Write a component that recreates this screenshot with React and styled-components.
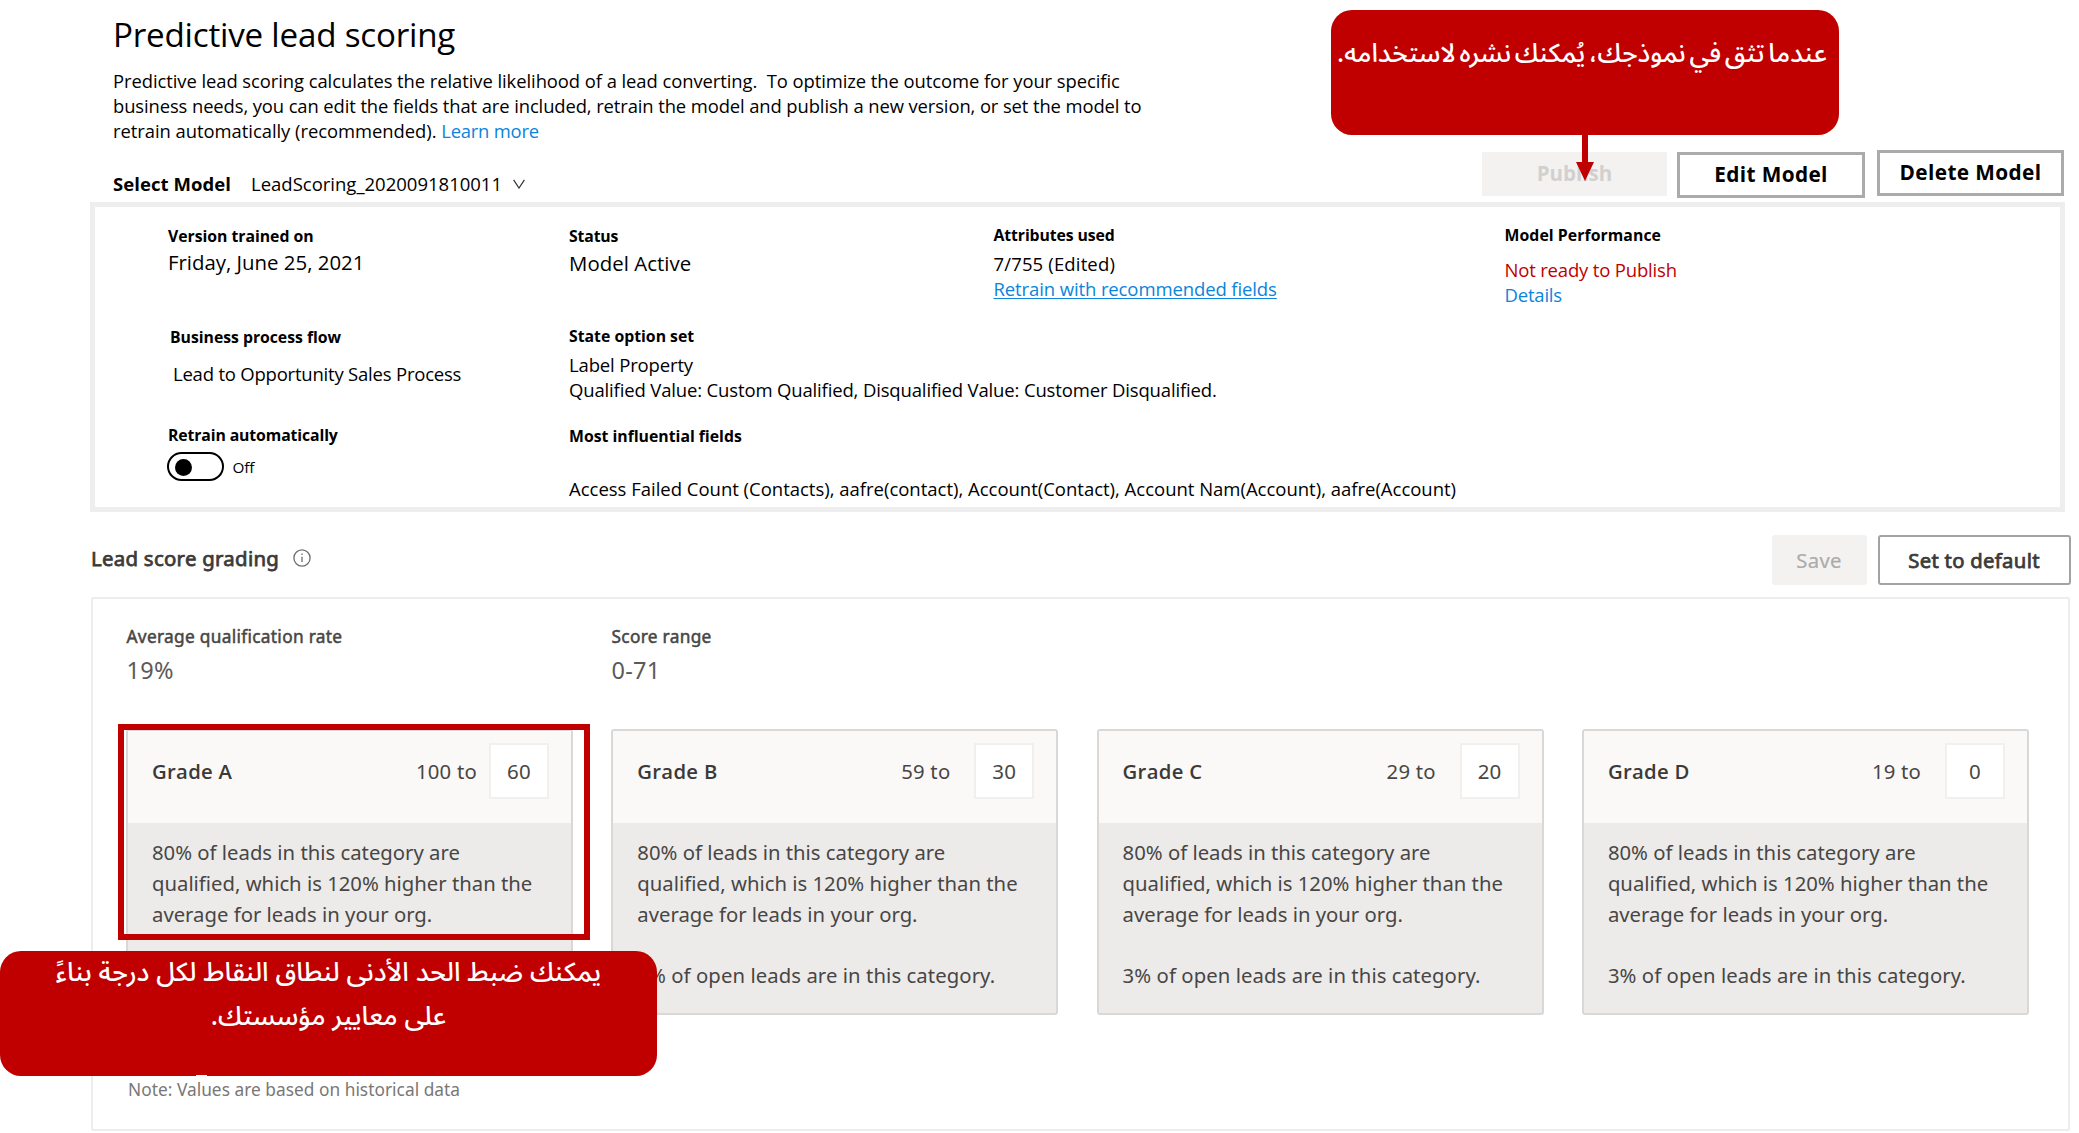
import React from "react";
import styled, { createGlobalStyle } from "styled-components";

const RED = "#c00000";
const LINK = "#0a84dc";
const HUMANIST = `"Open Sans", "Noto Sans", sans-serif`;
const UI = `"Noto Sans", "Open Sans", sans-serif`;
const ARABIC = `"Noto Sans Arabic", "DejaVu Sans Condensed", "DejaVu Sans", sans-serif`;

const GlobalStyle = createGlobalStyle`
  *, *::before, *::after { box-sizing: border-box; }
  body { margin: 0; background: #fff; overflow: hidden; }
  h1, h2, h3, p, dl, dt, dd { margin: 0; font-weight: 400; }
  button { margin: 0; padding: 0; border: 0; background: none; }
`;

const Page = styled.main`
  position: relative;
  width: 2079px;
  height: 1133px;
  padding-top: 13px;
  display: flex;
  flex-direction: column;
  overflow: hidden;
  background: #fff;
  color: #000;
  font-family: ${HUMANIST};
  white-space: nowrap;
`;

const Intro = styled.header`
  padding-left: 113px;
`;

const PageTitle = styled.h1`
  font-size: 33.2px;
  line-height: 44px;
  letter-spacing: -0.22px;
`;

const Description = styled.p`
  margin-top: 11px;
  font-size: 18.4px;
  line-height: 25px;
`;

const DescriptionLine = styled.span`
  display: block;
  white-space: pre;
  letter-spacing: ${(p) => p.$tracking}px;
`;

const Link = styled.a`
  color: ${LINK};
  letter-spacing: ${(p) => p.$tracking || 0}px;
  text-decoration: ${(p) => (p.$underlined ? "underline" : "none")};
  text-decoration-thickness: 1px;
  text-underline-offset: 2px;
`;

const Toolbar = styled.div`
  display: flex;
  align-items: flex-start;
  justify-content: space-between;
  height: 52px;
  margin-top: 7px;
  padding: 0 15px 0 113px;
`;

const ModelPicker = styled.div`
  display: flex;
  align-items: center;
  height: 24px;
  margin-top: 22px;
  font-size: 18.5px;
  line-height: 24px;
`;

const PickerLabel = styled.span`
  width: 138px;
  font-weight: 700;
  letter-spacing: 0.06px;
`;

const PickerValue = styled.span`
  width: 262px;
`;

const Actions = styled.div`
  display: flex;
  align-items: flex-start;
`;

const ModelButton = styled.button`
  width: ${(p) => p.$width}px;
  height: ${(p) => (p.disabled ? 44 : 46)}px;
  margin: ${(p) => (p.$raised ? 0 : 2)}px 0 0 ${(p) => p.$gap || 0}px;
  padding-bottom: 3px;
  border: ${(p) => (p.disabled ? "0" : "3px solid #ababab")};
  background: ${(p) => (p.disabled ? "#f3f2f1" : "#fff")};
  color: ${(p) => (p.disabled ? "#d2d0ce" : "#000")};
  font: 700 ${(p) => (p.disabled ? 20.5 : 20.8)}px/26px ${HUMANIST};
  letter-spacing: ${(p) => (p.disabled ? 0 : 0.38)}px;
`;

const ModelPanel = styled.section`
  display: grid;
  grid-template-columns: 401px 424.5px 511px 1fr;
  grid-template-rows: 101px 99px 82px;
  width: 1975px;
  height: 310px;
  margin-left: 90px;
  padding: 18px 0 0 73px;
  border: 5px solid #eeeeee;
`;

const Field = styled.dl`
  grid-column: ${(p) => p.$column};
  padding: ${(p) => p.$drop || 0}px 0 0 ${(p) => p.$indent || 0}px;
  min-width: 0;
`;

const FieldLabel = styled.dt`
  font-weight: 700;
  font-size: 15.8px;
  line-height: 20px;
  letter-spacing: ${(p) => p.$tracking || 0}px;
`;

const FieldValue = styled.dd`
  padding-left: ${(p) => p.$indent || 0}px;
  margin-top: ${(p) => p.$gap || 0}px;
  color: ${(p) => (p.$alert ? RED : "#000")};
  font-size: ${(p) => (p.$large ? 20.4 : 18.5)}px;
  line-height: ${(p) => (p.$large ? 26 : 25)}px;
  letter-spacing: ${(p) => p.$tracking || 0}px;
`;

const ToggleRow = styled.dd`
  display: flex;
  align-items: center;
  gap: 8.5px;
  margin: 7px 0 0 -1px;
  font-size: 15.3px;
  line-height: 20px;
  letter-spacing: -0.15px;
`;

const Toggle = styled.button`
  display: flex;
  align-items: center;
  width: 57px;
  height: 29px;
  padding-left: 6px;
  border: 2px solid #000;
  border-radius: 15px;
`;

const Knob = styled.span`
  width: 17px;
  height: 17px;
  margin-top: 1px;
  border-radius: 50%;
  background: #000;
`;

const GradingHeader = styled.div`
  display: flex;
  align-items: flex-start;
  justify-content: space-between;
  height: 50px;
  margin-top: 23px;
  padding: 0 8.5px 0 91px;
  color: #3b3a39;
  font-family: ${UI};
`;

const GradingTitle = styled.h2`
  display: flex;
  align-items: center;
  gap: 14px;
  height: 46px;
  font-size: 20.4px;
  letter-spacing: 0.28px;
  -webkit-text-stroke: 0.75px #3b3a39;
`;

const GradeButton = styled.button`
  width: ${(p) => p.$width}px;
  height: 50px;
  margin-left: ${(p) => p.$gap || 0}px;
  padding-bottom: 1px;
  border: ${(p) => (p.disabled ? "0" : "2px solid #a3a3a3")};
  border-radius: 3px;
  background: ${(p) => (p.disabled ? "#f3f2f1" : "#fff")};
  color: ${(p) => (p.disabled ? "#adabaa" : "#3b3a39")};
  font: 400 20.3px/28px ${UI};
  letter-spacing: 0.3px;
  -webkit-text-stroke: ${(p) => (p.disabled ? "0.2px #adabaa" : "0.75px #3b3a39")};
`;

const GradingPanel = styled.section`
  width: 1979px;
  height: 534px;
  margin: 12px 0 0 91px;
  padding: 26px 0 0 33px;
  border: 2px solid #ededed;
  border-radius: 2px;
  color: #484644;
  font-family: ${UI};
`;

const Stats = styled.div`
  display: flex;
  padding-left: 0.5px;
`;

const Stat = styled.dl`
  width: 485px;
`;

const StatLabel = styled.dt`
  font-size: 17.3px;
  line-height: 24px;
  letter-spacing: 0.3px;
  -webkit-text-stroke: 0.5px #484644;
`;

const StatValue = styled.dd`
  margin-top: 5px;
  color: #5c5a58;
  font-size: 23.5px;
  line-height: 32px;
  letter-spacing: 0.3px;
`;

const Cards = styled.div`
  display: flex;
  gap: 38.3px;
  margin-top: 43px;
`;

const Card = styled.article`
  width: 447px;
  height: 286px;
  border: 2px solid #d9d8d6;
  border-radius: 3px;
  background: #ecebea;
  font-size: 20.3px;
`;

const CardHeader = styled.div`
  display: flex;
  height: 92px;
  padding: 12px 22px 0 24px;
  background: #faf9f8;
  line-height: 56px;
`;

const CardTitle = styled.h3`
  flex: 1;
  color: #3b3a39;
  font-size: 20.3px;
  font-weight: 600;
  font-family: ${HUMANIST};
  letter-spacing: 0.3px;
`;

const Range = styled.span`
  width: 73px;
  letter-spacing: 0.2px;
`;

const LowerBound = styled.input`
  width: 60px;
  height: 56px;
  padding: 0;
  border: 2px solid #f1f0ef;
  background: #fff;
  color: #484644;
  font: 400 20.5px ${UI};
  letter-spacing: 0.2px;
  text-align: center;
`;

const CardBody = styled.div`
  display: flex;
  flex-direction: column;
  gap: 30.8px;
  padding: 14px 0 0 24px;
  line-height: 30.8px;
`;

const OpenShare = styled.p`
  letter-spacing: 0.08px;
`;

const Note = styled.p`
  margin: 63px 0 0 2px;
  color: #797775;
  font-size: 17.3px;
  line-height: 24px;
  letter-spacing: 0.03px;
`;

const Callout = styled.aside`
  position: absolute;
  left: ${(p) => p.$x}px;
  top: ${(p) => p.$y}px;
  width: ${(p) => p.$width}px;
  height: 125px;
  padding: ${(p) => p.$pad}px ${(p) => p.$inset || 0}px 0 0;
  border-radius: 21px;
  background: ${RED};
  color: #fff;
  direction: rtl;
  text-align: center;
  font-family: ${ARABIC};
  font-size: ${(p) => p.$size}px;
  font-weight: 500;
  line-height: 44px;
`;

const CalloutLine = styled.div`
  word-spacing: ${(p) => p.$wordGap || 0}px;
`;

const CalloutTick = styled.span`
  position: absolute;
  left: 196px;
  bottom: 0;
  width: 11px;
  height: 1px;
  background: #fff;
`;

const Arrow = styled.svg`
  position: absolute;
  left: 1576px;
  top: 134px;
`;

const Highlight = styled.div`
  position: absolute;
  left: 118px;
  top: 724px;
  width: 472px;
  height: 216px;
  border: 6px solid ${RED};
`;

const openShare = "3% of open leads are in this category.";

const grades = [
  { name: "Grade A", range: "100 to", bound: 60 },
  { name: "Grade B", range: "59 to", bound: 30, share: openShare },
  { name: "Grade C", range: "29 to", bound: 20, share: openShare },
  { name: "Grade D", range: "19 to", bound: 0, share: openShare },
];

function ChevronDown() {
  return (
    <svg width="12" height="10" viewBox="0 0 12 10" fill="none" stroke="#333" strokeWidth="1.2">
      <path d="M0.6 0.8 6 9 11.4 0.8" />
    </svg>
  );
}

function InfoIcon() {
  return (
    <svg width="18" height="18" viewBox="0 0 18 18" fill="none" stroke="#6f6d6b" strokeWidth="1.3">
      <circle cx="9" cy="9" r="8.1" />
      <path d="M9 7.8v5.2" />
      <path d="M9 4.6v1.5" />
    </svg>
  );
}

function GradeCard({ name, range, bound, share }) {
  return (
    <Card>
      <CardHeader>
        <CardTitle>{name}</CardTitle>
        <Range>{range}</Range>
        <LowerBound readOnly value={bound} />
      </CardHeader>
      <CardBody>
        <p>
          80% of leads in this category are
          <br />
          qualified, which is 120% higher than the
          <br />
          average for leads in your org.
        </p>
        {share && <OpenShare>{share}</OpenShare>}
      </CardBody>
    </Card>
  );
}

export default function App() {
  return (
    <>
      <GlobalStyle />
      <Page>
        <Intro>
          <PageTitle>Predictive lead scoring</PageTitle>
          <Description>
            <DescriptionLine $tracking={-0.06}>
              {"Predictive lead scoring calculates the relative likelihood of a lead converting.  To optimize the outcome for your specific"}
            </DescriptionLine>
            <DescriptionLine $tracking={-0.1}>
              {"business needs, you can edit the fields that are included, retrain the model and publish a new version, or set the model to"}
            </DescriptionLine>
            <DescriptionLine $tracking={-0.03}>
              {"retrain automatically (recommended). "}
              <Link $tracking={-0.2}>Learn more</Link>
            </DescriptionLine>
          </Description>
        </Intro>

        <Toolbar>
          <ModelPicker>
            <PickerLabel>Select Model</PickerLabel>
            <PickerValue>LeadScoring_2020091810011</PickerValue>
            <ChevronDown />
          </ModelPicker>
          <Actions>
            <ModelButton $width={185} disabled>Publish</ModelButton>
            <ModelButton $width={188} $gap={10}>Edit Model</ModelButton>
            <ModelButton $width={187} $gap={12} $raised>Delete Model</ModelButton>
          </Actions>
        </Toolbar>

        <ModelPanel>
          <Field $column={1} $drop={1}>
            <FieldLabel $tracking={-0.03}>Version trained on</FieldLabel>
            <FieldValue $large $gap={3}>Friday, June 25, 2021</FieldValue>
          </Field>
          <Field $column={2} $drop={1}>
            <FieldLabel $tracking={-0.15}>Status</FieldLabel>
            <FieldValue $large $gap={4} $tracking={0.05}>Model Active</FieldValue>
          </Field>
          <Field $column={3}>
            <FieldLabel $tracking={-0.1}>Attributes used</FieldLabel>
            <FieldValue $gap={6} $tracking={0.15}>7/755 (Edited)</FieldValue>
            <FieldValue>
              <Link $underlined $tracking={-0.11}>Retrain with recommended fields</Link>
            </FieldValue>
          </Field>
          <Field $column={4}>
            <FieldLabel $tracking={0.07}>Model Performance</FieldLabel>
            <FieldValue $alert $gap={12} $tracking={-0.18}>Not ready to Publish</FieldValue>
            <FieldValue>
              <Link $tracking={-0.2}>Details</Link>
            </FieldValue>
          </Field>

          <Field $column={1} $drop={1} $indent={2}>
            <FieldLabel $tracking={-0.03}>Business process flow</FieldLabel>
            <FieldValue $gap={14} $indent={3} $tracking={-0.21}>Lead to Opportunity Sales Process</FieldValue>
          </Field>
          <Field $column="2 / 5">
            <FieldLabel>State option set</FieldLabel>
            <FieldValue $gap={6} $tracking={-0.15}>Label Property</FieldValue>
            <FieldValue $tracking={-0.15}>
              Qualified Value: Custom Qualified, Disqualified Value: Customer Disqualified.
            </FieldValue>
          </Field>

          <Field $column={1}>
            <FieldLabel $tracking={-0.12}>Retrain automatically</FieldLabel>
            <ToggleRow>
              <Toggle>
                <Knob />
              </Toggle>
              Off
            </ToggleRow>
          </Field>
          <Field $column="2 / 5" $drop={1}>
            <FieldLabel>Most influential fields</FieldLabel>
            <FieldValue $gap={30} $tracking={-0.01}>
              Access Failed Count (Contacts), aafre(contact), Account(Contact), Account Nam(Account), aafre(Account)
            </FieldValue>
          </Field>
        </ModelPanel>

        <GradingHeader>
          <GradingTitle>
            Lead score grading
            <InfoIcon />
          </GradingTitle>
          <Actions>
            <GradeButton $width={95} disabled>Save</GradeButton>
            <GradeButton $width={193} $gap={11}>Set to default</GradeButton>
          </Actions>
        </GradingHeader>

        <GradingPanel>
          <Stats>
            <Stat>
              <StatLabel>Average qualification rate</StatLabel>
              <StatValue>19%</StatValue>
            </Stat>
            <Stat>
              <StatLabel>Score range</StatLabel>
              <StatValue>0-71</StatValue>
            </Stat>
          </Stats>
          <Cards>
            {grades.map((grade) => (
              <GradeCard key={grade.name} {...grade} />
            ))}
          </Cards>
          <Note>Note: Values are based on historical data</Note>
        </GradingPanel>

        <Callout $x={1331} $y={10} $width={508} $pad={22} $inset={6} $size={26}>
          <CalloutLine $wordGap={-3}>عندما تثق في نموذجك، يُمكنك نشره لاستخدامه.</CalloutLine>
        </Callout>
        <Arrow width="18" height="47" viewBox="0 0 18 47" fill={RED}>
          <path d="M6 0h6v28h6L9 47 0 28h6z" />
        </Arrow>

        <Highlight />
        <Callout $x={0} $y={951} $width={657} $pad={0} $size={26.3}>
          <CalloutLine>يمكنك ضبط الحد الأدنى لنطاق النقاط لكل درجة بناءً</CalloutLine>
          <CalloutLine>على معايير مؤسستك.</CalloutLine>
          <CalloutTick />
        </Callout>
      </Page>
    </>
  );
}
